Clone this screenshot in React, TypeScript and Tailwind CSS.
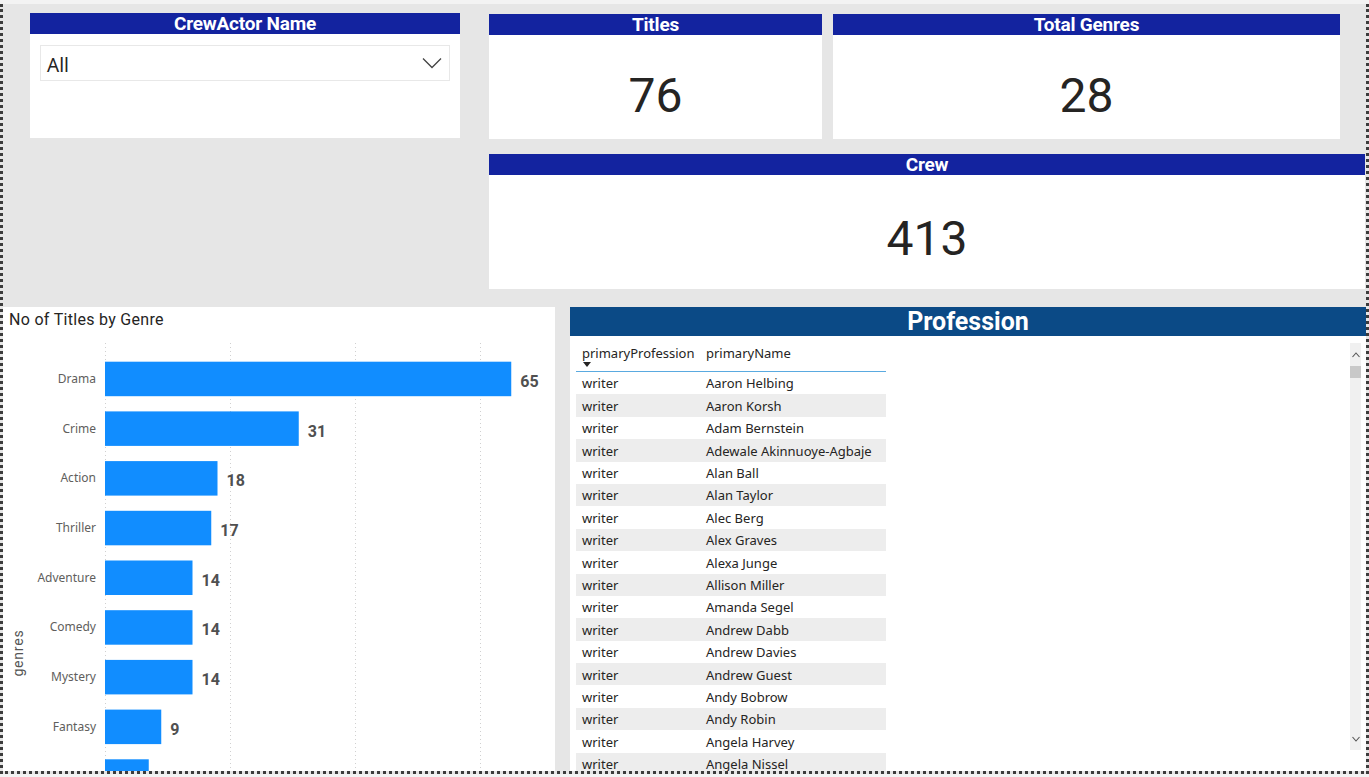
import React from 'react';

const din = { fontFamily: 'Roboto, "Liberation Sans", sans-serif' };
const segoe = { fontFamily: '"Segoe UI", "Noto Sans", "Open Sans", sans-serif' };

const genres = [
  { name: 'Drama', value: 65 },
  { name: 'Crime', value: 31 },
  { name: 'Action', value: 18 },
  { name: 'Thriller', value: 17 },
  { name: 'Adventure', value: 14 },
  { name: 'Comedy', value: 14 },
  { name: 'Mystery', value: 14 },
  { name: 'Fantasy', value: 9 },
  { name: '', value: 7 },
];

const names = [
  'Aaron Helbing', 'Aaron Korsh', 'Adam Bernstein', 'Adewale Akinnuoye-Agbaje', 'Alan Ball',
  'Alan Taylor', 'Alec Berg', 'Alex Graves', 'Alexa Junge', 'Allison Miller', 'Amanda Segel',
  'Andrew Dabb', 'Andrew Davies', 'Andrew Guest', 'Andy Bobrow', 'Andy Robin', 'Angela Harvey',
  'Angela Nissel',
];

const CardHeader: React.FC<{ title: string }> = ({ title }) => (
  <div
    className="h-[21px] bg-[#13239f] text-white text-[19px] font-bold leading-[22px] text-center tracking-[-0.2px]"
    style={din}
  >
    {title}
  </div>
);

const Kpi: React.FC<{ title: string; value: string; className: string; offset: string }> = ({ title, value, className, offset }) => (
  <div className={`bg-white flex flex-col ${className}`}>
    <CardHeader title={title} />
    <div className={`flex-1 flex items-center justify-center text-[48px] text-[#252423] ${offset}`} style={din}>
      {value}
    </div>
  </div>
);

const GenreChart: React.FC = () => {
  const x0 = 102;
  const k = 6.25;
  const top = 24.7;
  const step = 49.7;
  const h = 34.5;
  return (
    <svg width="552" height="434" className="block">
      {[0, 20, 40, 60].map((t) => (
        <line key={t} x1={x0 + t * k + 0.5} x2={x0 + t * k + 0.5} y1={6} y2={434} stroke="#d0d0d0" strokeWidth={1} strokeDasharray="1 3" />
      ))}
      {genres.map((g, i) => {
        const y = top + i * step;
        const w = g.value * k;
        return (
          <g key={i}>
            <rect x={x0} y={y} width={w} height={h} fill="#118dff" />
            {g.name && (
              <text x={93} y={y + h / 2 + 4} textAnchor="end" fontSize="12" fill="#605e5c" style={segoe}>
                {g.name}
              </text>
            )}
            <text x={x0 + w + 9} y={y + h / 2 + 8} fontSize="16" fontWeight="700" fill="#505050" style={din}>
              {g.value}
            </text>
          </g>
        );
      })}
      <text transform="translate(20 316) rotate(-90)" textAnchor="middle" fontSize="14" fill="#555" letterSpacing="0.8" style={din}>
        genres
      </text>
    </svg>
  );
};

const App: React.FC = () => {
  return (
    <div className="w-[1369px] h-[777px] bg-[#f3f3f3] pt-[4px] overflow-hidden">
      <div className="h-[770px] bg-[#e6e6e6] border-l-[3px] border-r-[3px] border-b-[3px] border-dotted border-[#3c3c3c] flex flex-col overflow-hidden">
        {/* top row */}
        <div className="h-[303px] flex shrink-0">
          <div className="ml-[27px] mt-[9px] w-[430px] h-[125px] bg-white flex flex-col">
            <CardHeader title="CrewActor Name" />
            <div className="mx-[10px] mt-[11px] h-[36px] border border-[#e8e8e8] flex items-center justify-between pl-[6px] pr-[7px]">
              <span className="text-[19px] text-[#252423] pt-[5px]" style={segoe}>All</span>
              <svg width="20" height="12" viewBox="0 0 20 12" fill="none">
                <path d="M1 1.5 L10 10.5 L19 1.5" stroke="#444" strokeWidth="1.3" />
              </svg>
            </div>
          </div>
          <div className="ml-[29px] mt-[10px] w-[876px] flex flex-col gap-[15px]">
            <div className="flex gap-[11px] h-[125px]">
              <Kpi title="Titles" value="76" className="w-[333px]" offset="pt-[17px]" />
              <Kpi title="Total Genres" value="28" className="w-[507px]" offset="pt-[17px]" />
            </div>
            <Kpi title="Crew" value="413" className="h-[135px]" offset="pt-[14px]" />
          </div>
        </div>

        {/* bottom row */}
        <div className="flex-1 flex overflow-hidden">
          <div className="w-[552px] bg-white flex flex-col overflow-hidden">
            <div className="h-[30px] pl-[6px] pt-[1px] text-[16px] text-[#252423] tracking-[0.3px]" style={din}>
              No of Titles by Genre
            </div>
            <GenreChart />
          </div>

          <div className="ml-[15px] flex-1 bg-white flex flex-col overflow-hidden">
            <div className="h-[29px] bg-[#0b4a86] text-white text-[25px] font-bold leading-[30px] text-center" style={din}>
              Profession
            </div>
            <div className="flex-1 flex overflow-hidden">
              <div className="ml-[6px] w-[310px] overflow-hidden text-[13px] text-[#252423]" style={segoe}>
                <div className="h-[36px] border-b border-[#5aaae0] flex pt-[8px]">
                  <div className="w-[124px] pl-[6px] relative leading-[18px]">
                    primaryProfession
                    <svg className="absolute left-[7px] top-[18px]" width="8" height="5" viewBox="0 0 8 5">
                      <path d="M0 0 H8 L4 5 Z" fill="#252423" />
                    </svg>
                  </div>
                  <div className="pl-[6px] leading-[18px]">primaryName</div>
                </div>
                {names.map((n, i) => (
                  <div key={n} className={`h-[22.4px] flex items-center pt-[2px] ${i % 2 === 1 ? 'bg-[#ededed]' : 'bg-white'}`}>
                    <div className="w-[124px] pl-[6px]">writer</div>
                    <div className="pl-[6px] whitespace-nowrap">{n}</div>
                  </div>
                ))}
              </div>
              <div className="flex-1" />
              <div className="mt-[7px] mb-[21px] mr-[5px] w-[11px] bg-[#f0f0f0] flex flex-col items-center">
                <svg className="mt-[9px]" width="8" height="6" viewBox="0 0 8 6" fill="none">
                  <path d="M0.5 5 L4 1 L7.5 5" stroke="#555" strokeWidth="1.1" />
                </svg>
                <div className="mt-[8px] w-[11px] h-[12px] bg-[#c8c8c8]" />
                <div className="flex-1" />
                <svg className="mb-[8px]" width="8" height="6" viewBox="0 0 8 6" fill="none">
                  <path d="M0.5 1 L4 5 L7.5 1" stroke="#555" strokeWidth="1.1" />
                </svg>
              </div>
            </div>
          </div>
        </div>
      </div>
    </div>
  );
};

export default App;
